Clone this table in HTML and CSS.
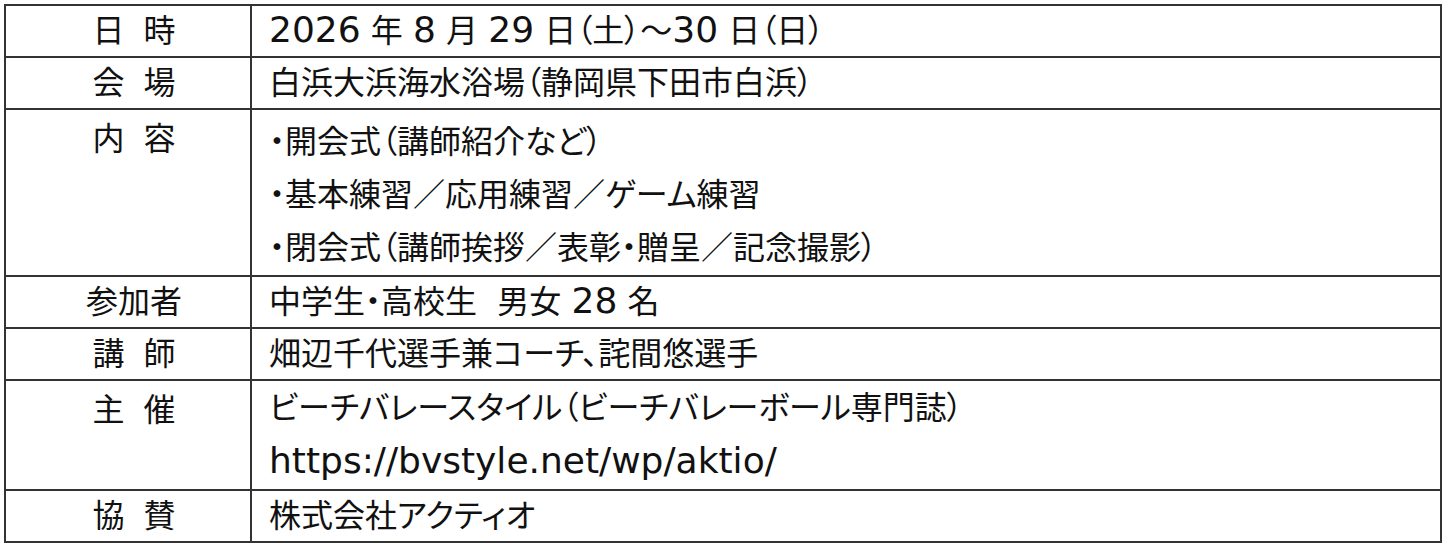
FILE: index.html
```html
<!DOCTYPE html>
<html lang="ja">
<head>
<meta charset="utf-8">
<title>開催概要</title>
<link rel="stylesheet" href="styles.css">
</head>
<body>
<div class="page">
  <table class="info">
    <colgroup>
      <col class="col-label">
      <col class="col-value">
    </colgroup>
    <tbody>
      <tr>
        <th>日 時</th>
        <td><span class="lat">2026</span> 年 <span class="lat">8</span> 月 <span class="lat">29</span> 日（土）～<span class="lat">30</span> 日（日）</td>
      </tr>
      <tr>
        <th>会 場</th>
        <td>白浜大浜海水浴場（静岡県下田市白浜）</td>
      </tr>
      <tr class="multi list">
        <th>内 容</th>
        <td>
          <div class="line">・開会式（講師紹介など）</div>
          <div class="line">・基本練習／応用練習／ゲーム練習</div>
          <div class="line">・閉会式（講師挨拶／表彰・贈呈／記念撮影）</div>
        </td>
      </tr>
      <tr>
        <th>参加者</th>
        <td>中学生・高校生&nbsp; 男女 <span class="lat">28</span> 名</td>
      </tr>
      <tr>
        <th>講 師</th>
        <td>畑辺千代選手兼コーチ、詫間悠選手</td>
      </tr>
      <tr class="multi">
        <th>主 催</th>
        <td>
          <div class="line">ビーチバレースタイル（ビーチバレーボール専門誌）</div>
          <div class="line"><span class="lat">https://bvstyle.net/wp/aktio/</span></div>
        </td>
      </tr>
      <tr>
        <th>協 賛</th>
        <td>株式会社アクティオ</td>
      </tr>
    </tbody>
  </table>
</div>
</body>
</html>
```

FILE: styles.css
```css
html, body {
  margin: 0;
  padding: 0;
  background: #ffffff;
}

.page {
  padding: 4px 0 0 4px;
}

.info {
  width: 1438px;
  border-collapse: collapse;
  table-layout: fixed;
  font-family: "DejaVu Sans", "Noto Sans CJK JP", sans-serif;
  font-size: 32px;
  font-feature-settings: "palt";
  color: #111111;
  margin: 0;
}

.col-label {
  width: 246px;
}

.info th,
.info td {
  border: 2px solid #333333;
  line-height: 50px;
  padding: 0;
  vertical-align: top;
  white-space: nowrap;
}

.info th {
  font-weight: normal;
  text-align: center;
  padding-left: 12px;
  word-spacing: 9px;
}

.info td {
  text-align: left;
  padding-left: 17px;
}

.lat {
  font-size: 36px;
  line-height: 1;
}

.multi th {
  padding-top: 4px;
}

.multi .line {
  line-height: 54px;
}

.list td {
  padding-top: 6px;
}

.list .line {
  line-height: 53px;
}
```
